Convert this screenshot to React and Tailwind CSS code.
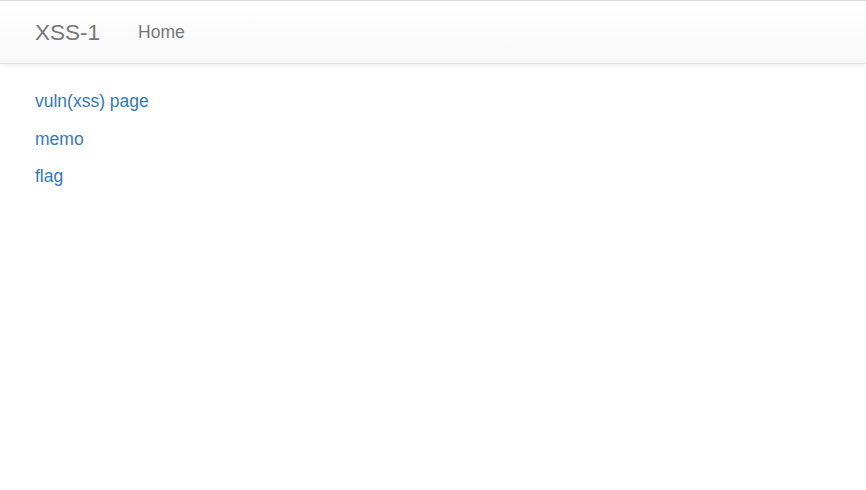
export default function App() {
  const links = ["vuln(xss) page", "memo", "flag"];
  return (
    <div className="min-h-screen bg-white font-['Liberation_Sans',Arial,sans-serif] text-[17.5px] leading-[25px] text-[#333]">
      <nav className="border-y border-t-[#dcdcdc] border-b-[#e0e0e0] bg-gradient-to-b from-white to-[#f8f8f8] shadow-[0_1px_5px_rgba(0,0,0,0.075)]">
        <div className="flex h-[62px] items-center pl-[16px]">
          <a className="px-[19px] text-[22.5px] leading-[25px] text-[#777]" href="#">
            XSS-1
          </a>
          <a className="px-[19px] text-[17.5px] leading-[25px] text-[#777]" href="#">
            Home
          </a>
        </div>
      </nav>
      <div className="mt-[25px] pl-[35px]">
        {links.map((l) => (
          <p key={l} className="mb-[12.5px]">
            <a className="text-[#337ab7]" href="#">
              {l}
            </a>
          </p>
        ))}
      </div>
    </div>
  );
}
